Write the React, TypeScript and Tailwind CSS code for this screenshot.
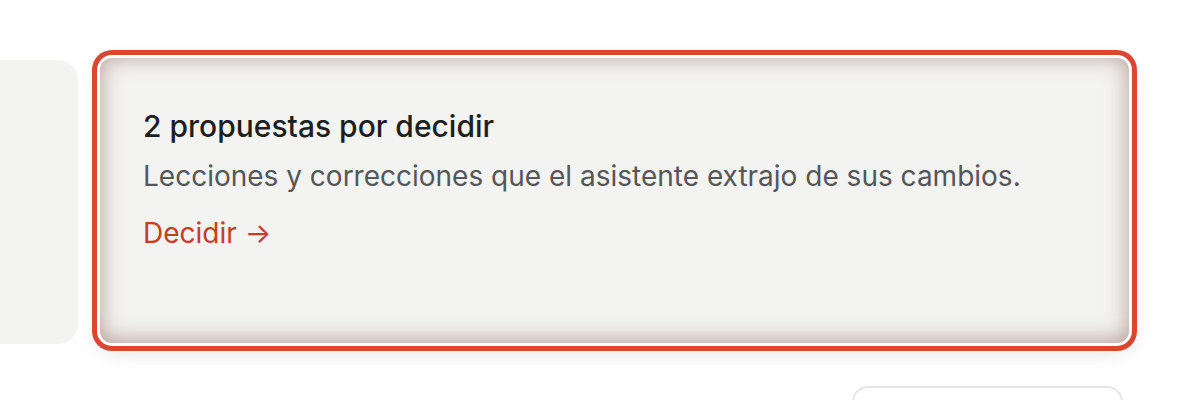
export default function App() {
  return (
    <div
      className="w-[1200px] h-[400px] overflow-hidden bg-white"
      style={{ fontFamily: "Inter, 'Noto Sans', sans-serif" }}
    >
      <div className="flex items-stretch gap-[22px] pt-[58px] pr-[71px]">
        <div className="w-[78px] h-[284px] mt-[2px] rounded-r-[20px] bg-[#f3f3f2]" />
        <div className="flex-1 h-[285px] rounded-[12px] bg-[#f3f3f1] ring-[5px] ring-[#dc4530] ring-offset-[3px] ring-offset-white shadow-[inset_0_-2px_22px_rgba(130,80,70,0.55),0_6px_24px_rgba(0,0,0,0.14)] pl-[43px] pt-[50px]">
          <div className="text-[30px] leading-[36px] font-medium text-[#1e1e1e]">
            2 propuestas por decidir
          </div>
          <div className="mt-[14px] text-[28px] leading-[36px] text-[#55565a]">
            Lecciones y correcciones que el asistente extrajo de sus cambios.
          </div>
          <div className="mt-[21px] text-[28px] leading-[36px] text-[#c63d26]">
            Decidir →
          </div>
        </div>
      </div>
      <div className="flex justify-end pr-[77px] pt-[42px]">
        <div className="w-[271px] h-[40px] rounded-[16px] border-2 border-[#e5e5e3] bg-white" />
      </div>
    </div>
  );
}
